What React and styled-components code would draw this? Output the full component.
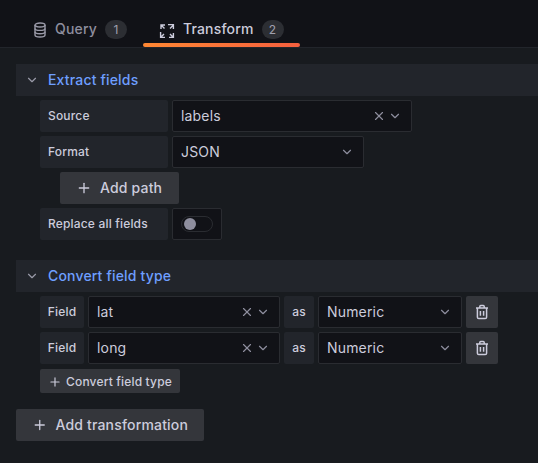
import React from "react";
import styled, { createGlobalStyle } from "styled-components";
import { ChevronDown, Plus, X } from "lucide-react";

const GlobalStyle = createGlobalStyle`
  html, body {
    margin: 0;
    background: #181b1f;
    color: #ccccdc;
    font-family: Inter, "Liberation Sans", sans-serif;
    letter-spacing: 0.01071em;
  }
`;

const Page = styled.div`
  width: 538px;
  height: 463px;
  overflow: hidden;
`;

const TabBar = styled.div`
  display: flex;
  height: 47px;
  padding-left: 16px;
  background: #111217;
  border-bottom: 1px solid #22252b;
  box-sizing: content-box;
`;

const Tab = styled.div`
  position: relative;
  display: flex;
  align-items: center;
  height: 47px;
  padding: 12px 16px 0;
  box-sizing: border-box;
  font-size: 14px;
  font-weight: 500;
  color: ${(p) => (p.$active ? "#ccccdc" : "#8e8e9e")};

  ${(p) =>
    p.$active &&
    `&::after {
      content: "";
      position: absolute;
      left: 0;
      right: 0;
      bottom: 0;
      height: 4px;
      border-radius: 2px;
      background: linear-gradient(90deg, #ff8833, #f55f3e);
    }`}
`;

const TabText = styled.span`
  margin-top: -2px;
`;

const TabIcon = styled.svg`
  width: 16px;
  height: 16px;
  margin: ${(p) => (p.$active ? "3px 8px 0 0" : "1px 7px 0 0")};
  fill: none;
  stroke: currentColor;
  stroke-width: 1.4;
  color: ${(p) => (p.$active ? "#ccccdc" : "#9a9aa8")};
`;

const Badge = styled.span`
  display: flex;
  align-items: center;
  justify-content: center;
  width: 22px;
  height: 19px;
  margin-left: 8px;
  border-radius: 10px;
  background: #2c2e33;
  font-size: 12px;
  font-weight: 400;
  color: #a0a0ae;
`;

const Content = styled.div`
  display: flex;
  flex-direction: column;
  padding: 16px 0 0 16px;
`;

const Section = styled.section`
  margin-bottom: 20px;
`;

const SectionHeader = styled.div`
  display: flex;
  align-items: center;
  height: 32px;
  padding: 0 0 1px 9px;
  box-sizing: border-box;
  gap: 9px;
  background: #22252b;
  color: #6e9fff;
  font-size: 14px;
  font-weight: 500;
  margin-bottom: 4px;

  svg {
    color: #9a9aa8;
  }
`;

const Rows = styled.div`
  display: flex;
  flex-direction: column;
  gap: 4px;
  padding-left: 24px;
`;

const Row = styled.div`
  display: flex;
  gap: 4px;
`;

const Label = styled.div`
  display: flex;
  align-items: center;
  justify-content: ${(p) => (p.$center ? "center" : "flex-start")};
  width: ${(p) => p.$w}px;
  height: 32px;
  padding: 0 8px 1px;
  box-sizing: border-box;
  border-radius: 2px;
  background: #22252b;
  font-size: 12px;
  font-weight: 500;
`;

const Select = styled.div`
  display: flex;
  align-items: center;
  width: ${(p) => p.$w}px;
  height: 32px;
  padding: 0 9px 0 8px;
  box-sizing: border-box;
  border: 1px solid #2a2c31;
  border-radius: 2px;
  background: #111217;
  font-size: 14px;

  span {
    flex: 1;
    margin-top: -2px;
  }

  svg {
    color: #8e8e9e;
  }
`;

const Clear = styled(X)`
  margin-right: 2px;
`;

const Button = styled.div`
  display: flex;
  align-items: center;
  align-self: flex-start;
  width: ${(p) => p.$w}px;
  height: ${(p) => (p.$small ? 24 : 32)}px;
  margin-left: ${(p) => p.$indent || 0}px;
  margin-top: ${(p) => p.$top || 0}px;
  padding: ${(p) => (p.$small ? "0 8px" : "0 16px 1px")};
  gap: ${(p) => (p.$small ? 4 : 8)}px;
  box-sizing: border-box;
  border-radius: 2px;
  background: #34363b;
  font-size: ${(p) => (p.$small ? 12 : 14)}px;
  font-weight: 500;
  white-space: nowrap;

  svg {
    margin-top: 1px;
  }
`;

const IconButton = styled.div`
  display: flex;
  align-items: center;
  justify-content: center;
  width: 32px;
  height: 32px;
  border-radius: 2px;
  background: #34363b;
`;

const SwitchBox = styled.div`
  display: flex;
  align-items: center;
  justify-content: center;
  width: 50px;
  height: 32px;
  box-sizing: border-box;
  border: 1px solid #2a2c31;
  border-radius: 2px;
  background: #111217;
`;

const Track = styled.div`
  display: flex;
  align-items: center;
  width: 32px;
  height: 16px;
  padding-left: 2px;
  box-sizing: border-box;
  border: 1px solid #2a2c31;
  border-radius: 8px;
`;

const Knob = styled.div`
  width: 12px;
  height: 12px;
  border-radius: 50%;
  background: #8e8e9e;
`;

function DatabaseIcon() {
  return (
    <TabIcon viewBox="0 0 16 16">
      <ellipse cx="8" cy="3" rx="5" ry="2" />
      <path d="M3 3v10c0 1.1 2.2 2 5 2s5-.9 5-2V3" />
      <path d="M3 6.4c0 1.1 2.2 2 5 2s5-.9 5-2M3 9.8c0 1.1 2.2 2 5 2s5-.9 5-2" />
    </TabIcon>
  );
}

function TransformIcon() {
  return (
    <TabIcon $active viewBox="0 0 16 16">
      <path d="M2 6V2h4M2 2l3.5 3.5" />
      <path d="M9 1.6h5.4V6M14.4 2L11 5.4" />
      <path d="M14.4 10v4.4H10M14.4 14.4L11 11" />
      <path d="M6 14.4H1.6V9M1.8 14.2L5 11" />
    </TabIcon>
  );
}

function TrashIcon() {
  return (
    <svg width="16" height="16" viewBox="0 0 16 16" fill="none" stroke="#ccccdc" strokeWidth="1.5">
      <path d="M2 4h12M5.8 4V2.5c0-.5.4-.9.9-.9h2.6c.5 0 .9.4.9.9V4" />
      <path d="M3.4 4v9.2c0 .8.6 1.4 1.4 1.4h6.4c.8 0 1.4-.6 1.4-1.4V4" />
      <path d="M6.4 7v4.8M9.6 7v4.8" />
    </svg>
  );
}

function FieldRow({ name }) {
  return (
    <Row>
      <Label $w={44} $center>Field</Label>
      <Select $w={192}>
        <span>{name}</span>
        <Clear size={14} />
        <ChevronDown size={14} />
      </Select>
      <Label $w={30} $center>as</Label>
      <Select $w={144}>
        <span>Numeric</span>
        <ChevronDown size={14} />
      </Select>
      <IconButton>
        <TrashIcon />
      </IconButton>
    </Row>
  );
}

export default function App() {
  return (
    <Page>
      <GlobalStyle />
      <TabBar>
        <Tab>
          <DatabaseIcon />
          <TabText>Query</TabText>
          <Badge>1</Badge>
        </Tab>
        <Tab $active>
          <TransformIcon />
          <TabText>Transform</TabText>
          <Badge>2</Badge>
        </Tab>
      </TabBar>
      <Content>
        <Section>
          <SectionHeader>
            <ChevronDown size={14} />
            Extract fields
          </SectionHeader>
          <Rows>
            <Row>
              <Label $w={128}>Source</Label>
              <Select $w={240}>
                <span>labels</span>
                <Clear size={14} />
                <ChevronDown size={14} />
              </Select>
            </Row>
            <Row>
              <Label $w={128}>Format</Label>
              <Select $w={192}>
                <span>JSON</span>
                <ChevronDown size={14} />
              </Select>
            </Row>
            <Button $indent={20} $w={119}>
              <Plus size={16} />
              Add path
            </Button>
            <Row>
              <Label $w={128}>Replace all fields</Label>
              <SwitchBox>
                <Track>
                  <Knob />
                </Track>
              </SwitchBox>
            </Row>
          </Rows>
        </Section>
        <Section>
          <SectionHeader>
            <ChevronDown size={14} />
            Convert field type
          </SectionHeader>
          <Rows>
            <FieldRow name="lat" />
            <FieldRow name="long" />
            <Button $small $top={1} $w={140}>
              <Plus size={14} />
              Convert field type
            </Button>
          </Rows>
        </Section>
        <Button $top={-4} $w={188}>
          <Plus size={16} />
          Add transformation
        </Button>
      </Content>
    </Page>
  );
}
